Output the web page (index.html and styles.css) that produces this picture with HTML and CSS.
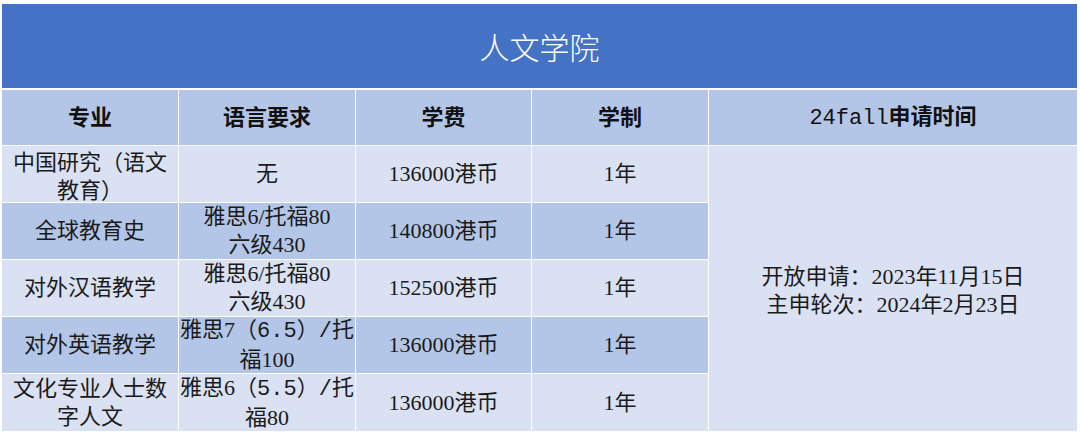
FILE: index.html
```html
<!DOCTYPE html>
<html lang="zh-CN">
<head>
<meta charset="utf-8">
<title>人文学院</title>
<link rel="stylesheet" href="styles.css">
</head>
<body>
<div class="sheet">
  <div class="title">人文学院</div>
  <div class="grid">
    <div class="cell head"><p>专业</p></div>
    <div class="cell head"><p>语言要求</p></div>
    <div class="cell head"><p>学费</p></div>
    <div class="cell head"><p>学制</p></div>
    <div class="cell head"><p><span class="mono">24fall</span>申请时间</p></div>

    <div class="cell light"><p class="low">中国研究（语文<br>教育）</p></div>
    <div class="cell light"><p>无</p></div>
    <div class="cell light"><p>136000港币</p></div>
    <div class="cell light"><p>1年</p></div>
    <div class="cell light merged"><p>开放申请：2023年11月15日<br>主申轮次：2024年2月23日</p></div>

    <div class="cell dark"><p>全球教育史</p></div>
    <div class="cell dark"><p>雅思6/托福80<br>六级430</p></div>
    <div class="cell dark"><p>140800港币</p></div>
    <div class="cell dark"><p>1年</p></div>

    <div class="cell light"><p>对外汉语教学</p></div>
    <div class="cell light"><p>雅思6/托福80<br>六级430</p></div>
    <div class="cell light"><p>152500港币</p></div>
    <div class="cell light"><p>1年</p></div>

    <div class="cell dark"><p>对外英语教学</p></div>
    <div class="cell dark"><p>雅思7（<span class="mono">6.5</span>）<span class="mono">/</span>托<br>福100</p></div>
    <div class="cell dark"><p>136000港币</p></div>
    <div class="cell dark"><p>1年</p></div>

    <div class="cell light"><p>文化专业人士数<br>字人文</p></div>
    <div class="cell light"><p>雅思6（<span class="mono">5.5</span>）<span class="mono">/</span>托<br>福80</p></div>
    <div class="cell light"><p>136000港币</p></div>
    <div class="cell light"><p>1年</p></div>
  </div>
</div>
</body>
</html>
```

FILE: styles.css
```css
html, body {
  margin: 0;
  padding: 0;
  background: #ffffff;
}

body {
  font-family: "Liberation Serif", "Noto Sans CJK SC", serif;
  color: #1a1a1a;
}

.sheet {
  width: 1075px;
  padding: 4px 0 0 2px;
}

.title {
  height: 84px;
  background: #4472c4;
  color: #ffffff;
  font-family: "Noto Sans CJK SC", sans-serif;
  font-weight: 300;
  font-size: 30px;
  display: flex;
  align-items: center;
  justify-content: center;
  margin-bottom: 2px;
}

.grid {
  display: grid;
  grid-template-columns: 176px 176px 175px 176px 368px;
  grid-template-rows: 55px repeat(4, 56px) 57px;
  gap: 1px;
  background: #ffffff;
}

.cell {
  display: flex;
  align-items: center;
  justify-content: center;
  text-align: center;
  font-size: 22px;
  line-height: 28px;
}

.cell p {
  margin: 0;
  white-space: nowrap;
}

.cell p.low {
  padding-top: 6px;
}

.head {
  background: #b4c6e7;
  font-weight: bold;
  color: #111111;
}

.light {
  background: #d9e1f2;
}

.dark {
  background: #b4c6e7;
}

.merged {
  grid-column: 5;
  grid-row: 2 / span 5;
  padding-top: 4px;
}

.mono {
  font-family: "Liberation Mono", monospace;
  font-weight: normal;
}
```
